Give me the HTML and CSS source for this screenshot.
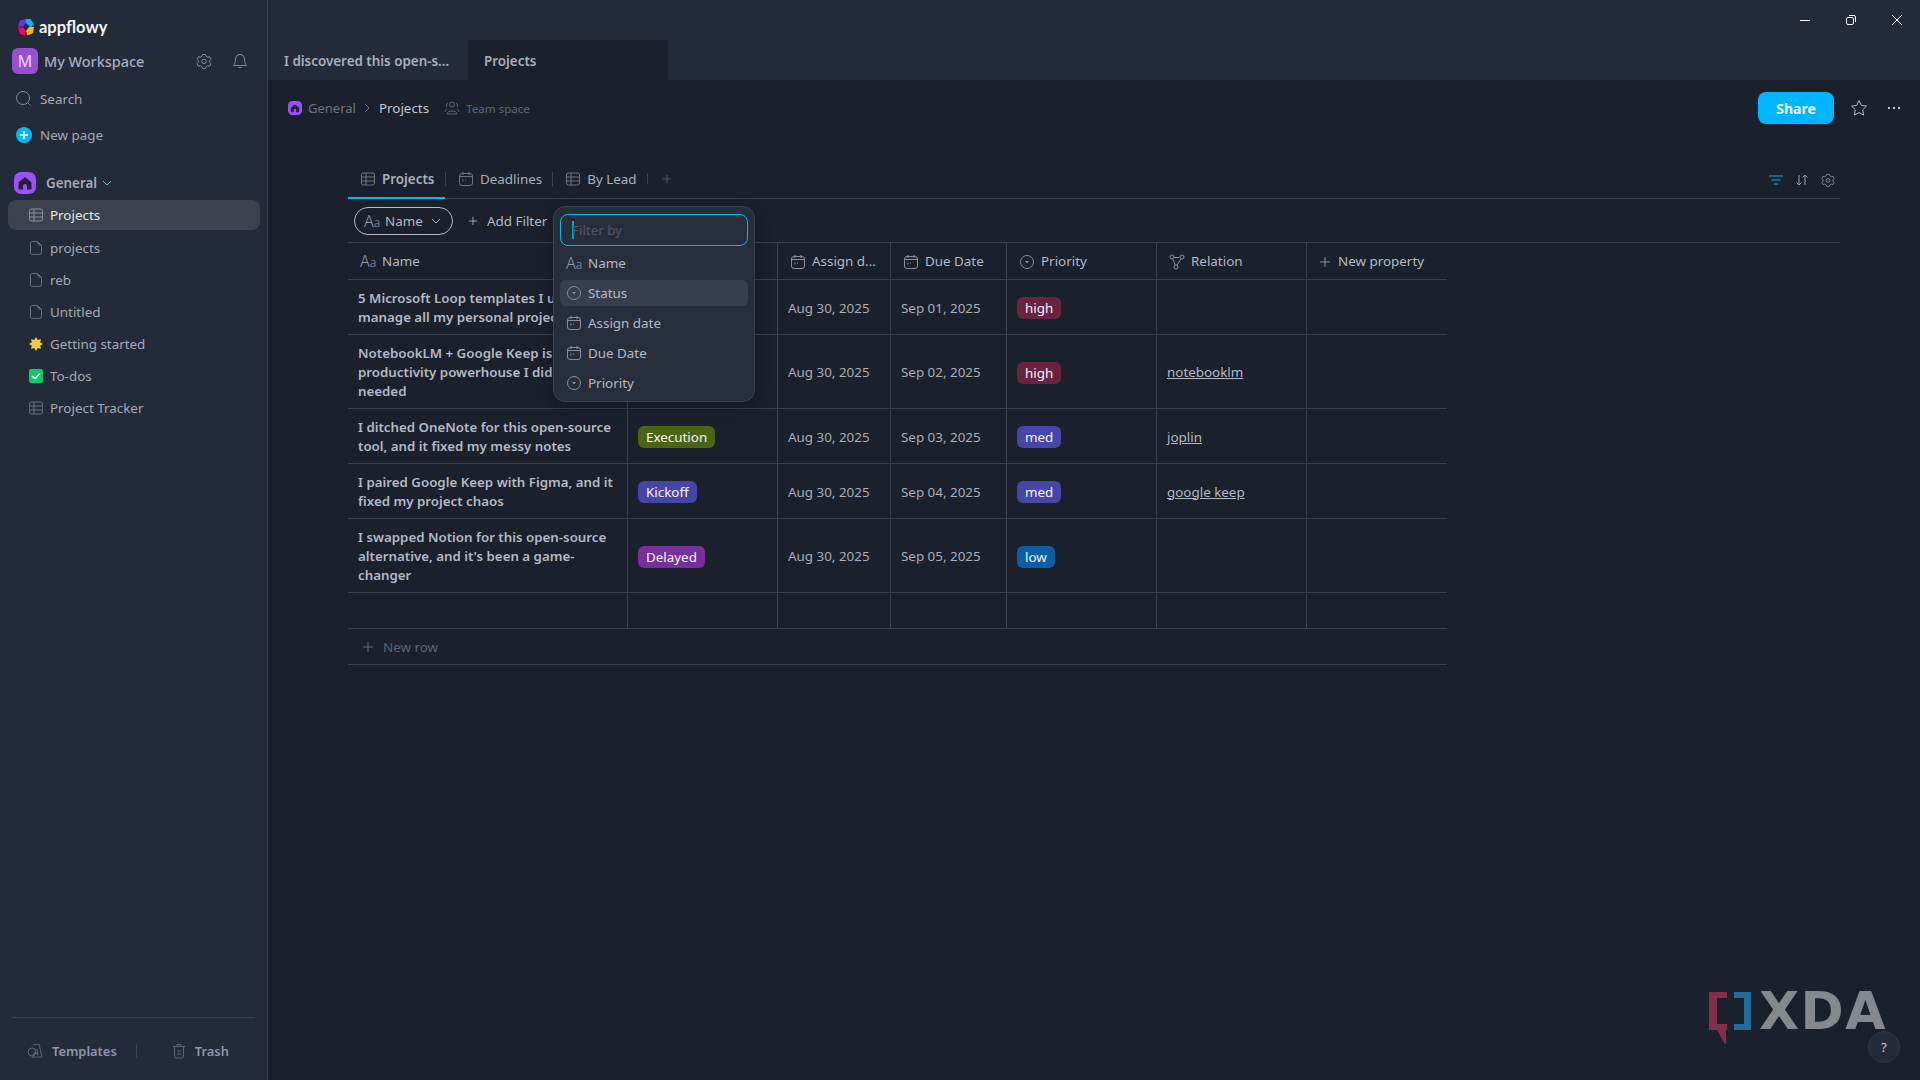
FILE: index.html

```html
<!DOCTYPE html>
<html lang="en">
<head>
  <meta charset="UTF-8" />
  <title>AppFlowy - Projects</title>
  <link rel="stylesheet" href="styles.css">
</head>
<body>
  <svg class="sprite" width="0" height="0">
    <symbol id="i-grid" viewBox="0 0 16 16"><rect x="1.5" y="2" width="13" height="12" rx="2" fill="none" stroke="currentColor"/><path d="M1.5 6h13M1.5 10h13M6 2v12" fill="none" stroke="currentColor"/></symbol>
    <symbol id="i-doc" viewBox="0 0 16 16"><path d="M3.5 1.5h6l4 4v7a2 2 0 0 1-2 2h-8a2 2 0 0 1-1-.5V3a1.5 1.5 0 0 1 1-1.5zM9.500 1.500a4 4 0 0 0 4 4" fill="none" stroke="currentColor"/></symbol>
    <symbol id="i-cal" viewBox="0 0 16 16"><rect x="1.500" y="2.500" width="13" height="12" rx="2.500" fill="none" stroke="currentColor"/><path d="M1.500 5.500h13M5 1v3M11 1v3M5 8.500v2M7.500 8.500v1" fill="none" stroke="currentColor"/></symbol>
    <symbol id="i-select" viewBox="0 0 16 16"><circle cx="8" cy="8" r="6.500" fill="none" stroke="currentColor"/><path d="M6 7h4l-2 2.500z" fill="currentColor"/></symbol>
    <symbol id="i-gear" viewBox="0 0 16 16"><path d="M6.500 1.500h3l.6 1.800 1.700.9 1.800-.5 1.400 2.500-1.300 1.300v1.900l1.300 1.300-1.400 2.500-1.800-.5-1.700.9-.6 1.800h-3l-.6-1.800-1.700-.9-1.800.5L1 10.700l1.300-1.300V7.500L1 6.200l1.400-2.500 1.800.5 1.700-.9z" fill="none" stroke="currentColor"/><circle cx="8" cy="8.450" r="2.200" fill="none" stroke="currentColor"/></symbol>
    <symbol id="i-plus" viewBox="0 0 12 12"><path d="M6 1v10M1 6h10" fill="none" stroke="currentColor"/></symbol>
    <symbol id="i-home" viewBox="0 0 22 22"><rect width="22" height="22" rx="7" fill="#9e4fff"/><path d="M11 5l6.500 5.500V16a1.500 1.500 0 0 1-1.500 1.500h-3v-3.500a2 2 0 0 0-4 0v3.500H6A1.500 1.500 0 0 1 4.500 16v-5.500z" fill="#1d2330"/></symbol>
    <symbol id="i-down" viewBox="0 0 10 6"><path d="M1 1l4 4 4-4" fill="none" stroke="currentColor"/></symbol>
  </svg>

  <aside class="sidebar">
    <div class="brand">
      <svg class="brand-logo" width="18" height="18" viewBox="0 0 18 18">
        <path d="M9 1L3 2.500 1 8.500h5L9 5z" fill="#8427e0"/>
        <path d="M9 1h4.500L17 6.500l-3.500 3L9 5z" fill="#00b5ff"/>
        <path d="M17 9l-1 6-5.500 2.500L9 13l3-4z" fill="#ffbd00"/>
        <path d="M1 9.500h5l3 3.500-1 4.500-5-1.500z" fill="#fb006d"/>
      </svg>
      <span class="brand-name">appflowy</span>
    </div>
    <div class="workspace">
      <div class="avatar">M</div>
      <span class="workspace-name">My Workspace</span>
      <svg class="workspace-gear" width="16" height="16"><use href="#i-gear"/></svg>
      <svg class="workspace-bell" width="16" height="16" viewBox="0 0 16 16"><path d="M8 1.500a4.500 4.500 0 0 0-4.500 4.500c0 4-1.500 5.500-2 6.500h13c-.5-1-2-2.500-2-6.500A4.500 4.500 0 0 0 8 1.500zM6.500 14.500h3" fill="none" stroke="currentColor"/></svg>
    </div>
    <div class="side-action">
      <svg width="16" height="16" viewBox="0 0 16 16"><circle cx="7" cy="7" r="6.500" fill="none" stroke="currentColor"/><path d="M12 12l2.500 2.500" stroke="currentColor"/></svg>
      <span>Search</span>
    </div>
    <div class="side-action">
      <svg width="16" height="16" viewBox="0 0 16 16"><circle cx="8" cy="8" r="8" fill="#00bcf0"/><path d="M8 4v8M4 8h8" stroke="#fff" stroke-width="1.500"/></svg>
      <span>New page</span>
    </div>
    <div class="space-head">
      <svg width="22" height="22"><use href="#i-home"/></svg>
      <span class="space-name">General</span>
      <svg width="10" height="6"><use href="#i-down"/></svg>
    </div>
    <nav class="page-list">
      <div class="page-item active"><svg width="16" height="16"><use href="#i-grid"/></svg>Projects</div>
      <div class="page-item"><svg width="16" height="16"><use href="#i-doc"/></svg>projects</div>
      <div class="page-item"><svg width="16" height="16"><use href="#i-doc"/></svg>reb</div>
      <div class="page-item"><svg width="16" height="16"><use href="#i-doc"/></svg>Untitled</div>
      <div class="page-item"><svg width="16" height="16" viewBox="0 0 16 16"><path d="M8 1l1.800 3 3.200-1-.8 3.300L15 8l-2.800 1.700.8 3.300-3.200-1L8 15l-1.800-3-3.200 1 .8-3.300L1 8l2.800-1.700L3 3l3.200 1z" fill="#f6c945"/></svg>Getting started</div>
      <div class="page-item"><svg width="16" height="16" viewBox="0 0 16 16"><rect x="1" y="1" width="14" height="14" rx="2" fill="#0ecb6a"/><path d="M4 8l3 2.500 5-5" fill="none" stroke="#fff" stroke-width="1.500"/></svg>To-dos</div>
      <div class="page-item"><svg width="16" height="16"><use href="#i-grid"/></svg>Project Tracker</div>
    </nav>
    <div class="side-footer">
      <div class="footer-link templates">
        <svg width="16" height="16" viewBox="0 0 16 16"><circle cx="5" cy="9" r="4" fill="none" stroke="currentColor"/><path d="M6 2l6-1 3 13H5l3-5 3 3-1-6" fill="none" stroke="currentColor"/></svg>
        Templates
      </div>
      <div class="footer-rule"></div>
      <div class="footer-link trash">
        <svg width="14" height="16" viewBox="0 0 14 16"><path d="M1 3.500h12M5 3.500V1.500h4v2M2.500 3.500v10a1.500 1.500 0 0 0 1.500 1.500h6a1.500 1.500 0 0 0 1.500-1.500v-10M5 8h4M5 11h4" fill="none" stroke="currentColor"/></svg>
        Trash
      </div>
    </div>
  </aside>

  <main class="main">
    <header class="topbar">
      <div class="tab">I discovered this open-s...</div>
      <div class="tab tab-active">Projects</div>
      <div class="win-controls">
        <svg width="12" height="12" viewBox="0 0 12 12"><path d="M1 6.500h10" stroke="#fff"/></svg>
        <svg width="12" height="12" viewBox="0 0 12 12"><rect x="1.500" y="3.500" width="7" height="7" rx="1.500" fill="none" stroke="#fff"/><path d="M4 1.500h5a1.500 1.500 0 0 1 1.500 1.500v5" fill="none" stroke="#fff"/></svg>
        <svg width="12" height="12" viewBox="0 0 12 12"><path d="M1 1l10 10M11 1L1 11" stroke="#fff"/></svg>
      </div>
    </header>

    <div class="crumbs">
      <svg width="14" height="14"><use href="#i-home"/></svg>
      <span class="crumb-general">General</span>
      <svg class="crumb-sep" width="6" height="10" viewBox="0 0 6 10"><path d="M1 1l4 4-4 4" fill="none" stroke="currentColor"/></svg>
      <span class="crumb-current">Projects</span>
      <svg class="crumb-team-icon" width="16" height="14" viewBox="0 0 16 14"><circle cx="8" cy="3.500" r="2.500" fill="none" stroke="currentColor"/><path d="M3 13c0-4 10-4 10 0zM4 2.500a2 2 0 0 0-1 3.500M12 2.500a2 2 0 0 1 1 3.500M1 11c0-2 1-3 2-3M15 11c0-2-1-3-2-3" fill="none" stroke="currentColor"/></svg>
      <span class="crumb-team">Team space</span>
      <div class="crumb-actions">
        <button class="share-btn">Share</button>
        <svg width="18" height="18" viewBox="0 0 18 18"><path d="M9 1.500l2.300 4.900 5.200.7-3.800 3.700.9 5.300L9 13.600l-4.600 2.500.9-5.300L1.500 7.100l5.200-.7z" fill="none" stroke="#b4bac6" stroke-linejoin="round"/></svg>
        <svg class="dots" width="14" height="4" viewBox="0 0 14 4"><circle cx="2" cy="2" r="1.200" fill="#b4bac6"/><circle cx="7" cy="2" r="1.200" fill="#b4bac6"/><circle cx="12" cy="2" r="1.200" fill="#b4bac6"/></svg>
      </div>
    </div>

    <section class="board">
      <div class="view-tabs">
        <div class="view-tab current"><svg width="16" height="16"><use href="#i-grid"/></svg>Projects</div>
        <div class="view-tab"><svg width="16" height="16"><use href="#i-cal"/></svg>Deadlines</div>
        <div class="view-tab"><svg width="16" height="16"><use href="#i-grid"/></svg>By Lead</div>
        <svg class="view-add" width="10" height="10"><use href="#i-plus"/></svg>
        <div class="view-tools">
          <svg width="14" height="10" viewBox="0 0 14 10"><path d="M0 1h14M2.500 5h9M5 9h4" stroke="#0e7fae" stroke-width="1.500"/></svg>
          <svg width="14" height="12" viewBox="0 0 14 12"><path d="M4 1v10M1.500 8.500L4 11l2.500-2.500M10 11V1M7.500 3.500L10 1l2.500 2.500" fill="none" stroke="#9aa0ac"/></svg>
          <svg width="14" height="14"><use href="#i-gear"/></svg>
        </div>
      </div>

      <div class="filter-row">
        <div class="filter-pill"><span class="aa">A<small>a</small></span>Name<svg width="10" height="6"><use href="#i-down"/></svg></div>
        <div class="add-filter"><svg width="10" height="10"><use href="#i-plus"/></svg>Add Filter</div>
      </div>

      <div class="filter-popup">
        <div class="popup-input"><span class="caret"></span>Filter by</div>
        <div class="popup-item"><span class="aa">A<small>a</small></span>Name</div>
        <div class="popup-item hover"><svg width="16" height="16"><use href="#i-select"/></svg>Status</div>
        <div class="popup-item"><svg width="16" height="16"><use href="#i-cal"/></svg>Assign date</div>
        <div class="popup-item"><svg width="16" height="16"><use href="#i-cal"/></svg>Due Date</div>
        <div class="popup-item"><svg width="16" height="16"><use href="#i-select"/></svg>Priority</div>
      </div>

      <div class="grid-head">
        <div class="row head-row">
          <div class="cell"><span class="aa">A<small>a</small></span>Name</div>
          <div class="cell"></div>
          <div class="cell"><svg width="16" height="16"><use href="#i-cal"/></svg>Assign d...</div>
          <div class="cell"><svg width="16" height="16"><use href="#i-cal"/></svg>Due Date</div>
          <div class="cell"><svg width="16" height="16"><use href="#i-select"/></svg>Priority</div>
          <div class="cell"><svg width="16" height="16" viewBox="0 0 16 16"><circle cx="3" cy="3" r="2" fill="none" stroke="currentColor"/><circle cx="13" cy="3" r="2" fill="none" stroke="currentColor"/><circle cx="7" cy="13" r="2" fill="none" stroke="currentColor"/><path d="M5 3.500l5.500 0M3.800 5l2.400 6M12 5l-4 6" fill="none" stroke="currentColor"/></svg>Relation</div>
          <div class="cell"><svg width="12" height="12"><use href="#i-plus"/></svg><span class="new-prop">New property</span></div>
        </div>
      </div>

      <div class="row">
        <div class="cell name">5 Microsoft Loop templates I use to manage all my personal projects</div>
        <div class="cell"><span class="tag tag-green">Planning</span></div>
        <div class="cell date">Aug 30, 2025</div>
        <div class="cell date">Sep 01, 2025</div>
        <div class="cell"><span class="tag tag-red">high</span></div>
        <div class="cell"></div>
        <div class="cell"></div>
      </div>
      <div class="row">
        <div class="cell name">NotebookLM + Google Keep is a productivity powerhouse I didn't know I needed</div>
        <div class="cell"><span class="tag tag-green">Planning</span></div>
        <div class="cell date">Aug 30, 2025</div>
        <div class="cell date">Sep 02, 2025</div>
        <div class="cell"><span class="tag tag-red">high</span></div>
        <div class="cell"><a class="rel-link">notebooklm</a></div>
        <div class="cell"></div>
      </div>
      <div class="row">
        <div class="cell name">I ditched OneNote for this open-source tool, and it fixed my messy notes</div>
        <div class="cell"><span class="tag tag-green">Execution</span></div>
        <div class="cell date">Aug 30, 2025</div>
        <div class="cell date">Sep 03, 2025</div>
        <div class="cell"><span class="tag tag-indigo">med</span></div>
        <div class="cell"><a class="rel-link">joplin</a></div>
        <div class="cell"></div>
      </div>
      <div class="row">
        <div class="cell name">I paired Google Keep with Figma, and it fixed my project chaos</div>
        <div class="cell"><span class="tag tag-indigo">Kickoff</span></div>
        <div class="cell date">Aug 30, 2025</div>
        <div class="cell date">Sep 04, 2025</div>
        <div class="cell"><span class="tag tag-indigo">med</span></div>
        <div class="cell"><a class="rel-link">google keep</a></div>
        <div class="cell"></div>
      </div>
      <div class="row">
        <div class="cell name">I swapped Notion for this open-source alternative, and it's been a game-changer</div>
        <div class="cell"><span class="tag tag-purple">Delayed</span></div>
        <div class="cell date">Aug 30, 2025</div>
        <div class="cell date">Sep 05, 2025</div>
        <div class="cell"><span class="tag tag-blue">low</span></div>
        <div class="cell"></div>
        <div class="cell"></div>
      </div>
      <div class="row empty-row">
        <div class="cell"></div><div class="cell"></div><div class="cell"></div><div class="cell"></div><div class="cell"></div><div class="cell"></div><div class="cell"></div>
      </div>
      <div class="new-row"><svg width="12" height="12"><use href="#i-plus"/></svg>New row</div>
    </section>

    <div class="watermark">
      <svg width="42" height="52" viewBox="0 0 42 52">
        <path d="M0 0h18v6H8v26h10v6h-1v16L8 38H0z" fill="#8c2d4e"/>
        <path d="M25 0h17v38H25v-6h10V6H25z" fill="#22719f"/>
      </svg>
      <span class="watermark-text">XDA</span>
    </div>
    <div class="help-btn">?</div>
  </main>
</body>
</html>
```

FILE: styles.css

```css
* {
  box-sizing: border-box;
}
body {
  margin: 0;
  width: 1920px;
  height: 1080px;
  overflow: hidden;
  display: flex;
  font-family: "Noto Sans", sans-serif;
  font-size: 13.4px;
  background: #1a202c;
  color: #b4bac6;
}
.sprite {
  position: absolute;
}
svg {
  flex: none;
  display: block;
}
.aa {
  font-size: 16px;
  font-weight: 300;
  color: #9298a4;
  width: 16px;
  flex: none;
  white-space: nowrap;
}
.aa small {
  font-size: 12px;
}

/* sidebar */
.sidebar {
  width: 268px;
  flex: none;
  background: #232b38;
  border-right: 1px solid #3a4150;
  display: flex;
  flex-direction: column;
  height: 1080px;
}
.brand {
  height: 48px;
  padding: 6px 0 0 17px;
  display: flex;
  align-items: center;
  gap: 4px;
}
.brand-name {
  font-family: "Lato", sans-serif;
  font-size: 16.5px;
  font-weight: 700;
  color: #f2f4f7;
}
.workspace {
  height: 26px;
  padding-left: 12px;
  display: flex;
  align-items: center;
  color: #858b98;
}
.avatar {
  width: 26px;
  height: 26px;
  border-radius: 6px;
  background: #9a4fd1;
  color: #eadcf5;
  font-size: 16px;
  text-align: center;
  line-height: 26px;
}
.workspace-name {
  margin-left: 6px;
  font-size: 14.4px;
  font-weight: 500;
  color: #a9afbb;
  width: 152px;
}
.workspace-bell {
  margin-left: 20px;
}
.side-action {
  height: 36px;
  padding-left: 16px;
  display: flex;
  align-items: center;
  gap: 8px;
  color: #a4aab6;
}
.side-action svg {
  color: #858b98;
}
.side-action:nth-child(3) {
  margin-top: 7px;
}
.space-head {
  margin-top: 15px;
  height: 30px;
  padding-left: 14px;
  display: flex;
  align-items: center;
  color: #a4aab6;
}
.space-name {
  margin-left: 10px;
  margin-right: 5px;
  font-weight: 600;
}
.page-list {
  margin-top: 2px;
  padding: 0 7px 0 8px;
}
.page-item {
  height: 32px;
  padding-left: 20px;
  display: flex;
  align-items: center;
  gap: 6px;
  border-radius: 8px;
  color: #a4aab6;
}
.page-item svg {
  color: #686f7d;
}
.page-item.active {
  height: 30px;
  margin-bottom: 2px;
  background: #3b424e;
  color: #e6e9ee;
}
.page-item.active svg {
  color: #8a909c;
}
.side-footer {
  margin: auto 12px 0;
  height: 63px;
  border-top: 1px solid #3a4150;
  display: flex;
  align-items: center;
  padding: 3px 0 0 15px;
  color: #9095a8;
  font-size: 12.9px;
  font-weight: 600;
}
.footer-link {
  display: flex;
  align-items: center;
  gap: 9px;
}
.footer-link svg {
  color: #5f6675;
}
.footer-rule {
  width: 1px;
  height: 14px;
  background: #3a4150;
  margin: 0 35px 0 19px;
}

/* main */
.main {
  flex: 1;
  position: relative;
  min-width: 0;
}
.topbar {
  height: 80px;
  background: #232b38;
  display: flex;
  align-items: flex-end;
}
.tab {
  width: 200px;
  height: 40px;
  padding: 1px 0 0 16px;
  line-height: 40px;
  font-weight: 600;
  color: #a9afbb;
  white-space: nowrap;
}
.win-controls {
  margin-left: auto;
  align-self: flex-start;
  display: flex;
  gap: 34px;
  padding: 14px 17px 0 0;
}
.tab-active {
  background: #1a202c;
}
.crumbs {
  height: 56px;
  padding: 0 19px 0 20px;
  display: flex;
  align-items: center;
}
.crumb-general {
  margin-left: 6px;
  font-size: 13px;
  color: #6d7482;
}
.crumb-sep {
  margin: 0 9px 0 8px;
  color: #6d7482;
}
.crumb-current {
  color: #c4c9d2;
}
.crumb-team-icon {
  margin: 0 6px 0 15px;
  color: #5f6675;
}
.crumb-team {
  font-size: 11.6px;
  color: #5f6675;
}
.crumb-actions {
  margin-left: auto;
  display: flex;
  align-items: center;
  gap: 16px;
}
.share-btn {
  width: 76px;
  height: 32px;
  border: 0;
  border-radius: 8px;
  background: #00b5ff;
  color: #f4fbff;
  font-family: inherit;
  font-size: 14px;
  font-weight: 700;
}
.dots {
  margin-left: 3px;
}

/* board */
.board {
  position: relative;
  margin: 24px 80px 0;
}
.view-tabs {
  height: 39px;
  border-bottom: 1px solid #3a4150;
  display: flex;
  align-items: center;
}
.view-tab {
  height: 38px;
  display: flex;
  align-items: center;
  gap: 6px;
  padding: 0 10px 0 12px;
  color: #a9afbb;
  white-space: nowrap;
}
.view-tab svg {
  color: #6d7482;
}
.view-tab.current {
  width: 97px;
  height: 39px;
  margin-bottom: -1px;
  padding: 0 0 0 12px;
  font-weight: 600;
  border-bottom: 2px solid #00bcf0;
}
.view-tab:not(.current) {
  border-left: 1px solid #3a4150;
  height: 14px;
}
.view-add {
  color: #5f6675;
  box-sizing: content-box;
  padding-left: 14px;
  border-left: 1px solid #3a4150;
}
.view-tools {
  margin-left: auto;
  padding: 2px 5px 0 0;
  display: flex;
  align-items: center;
  gap: 12px;
  color: #8a909c;
}
.filter-row {
  height: 43px;
  padding: 1px 0 0 6px;
  display: flex;
  align-items: center;
}
.filter-pill {
  width: 99px;
  height: 28px;
  border: 1px solid #b4bac6;
  border-radius: 14px;
  padding-left: 9px;
  display: flex;
  align-items: center;
  gap: 5px;
  color: #b4bac6;
}
.filter-pill svg {
  margin-left: 3px;
}
.add-filter {
  margin-left: 15px;
  display: flex;
  align-items: center;
  gap: 9px;
  color: #b4bac6;
}
.filter-popup {
  position: absolute;
  left: 205px;
  top: 46px;
  width: 202px;
  height: 196px;
  padding: 7px 6px;
  background: #272e3b;
  border: 1px solid #3a4150;
  border-radius: 12px;
  box-shadow: 0 4px 16px rgba(0, 0, 0, .25);
  z-index: 5;
}
.popup-input {
  height: 32px;
  margin-bottom: 2px;
  border: 1px solid #00bcf0;
  border-radius: 8px;
  padding-left: 11px;
  display: flex;
  align-items: center;
  color: #4f5666;
}
.caret {
  width: 2px;
  height: 18px;
  background: #00a0d6;
  margin-right: -2px;
  flex: none;
}
.popup-item {
  height: 26px;
  margin-top: 4px;
  padding-left: 6px;
  border-radius: 6px;
  display: flex;
  align-items: center;
  gap: 6px;
  color: #b4bac6;
}
.popup-item svg,
.cell svg {
  color: #8a909c;
}
.popup-item.hover {
  background: #383f4c;
}
.grid-head {
  border-top: 1px solid #3a4150;
}
.row {
  width: 1099px;
  display: grid;
  grid-template-columns: 280px 150px 113px 116px 150px 150px 140px;
  border-bottom: 1px solid #3a4150;
}
.cell {
  border-right: 1px solid #3a4150;
  display: flex;
  align-items: center;
  padding: 9px 10px 7px;
  line-height: 19px;
  min-height: 54px;
  white-space: nowrap;
  color: #a9aeb8;
}
.cell:last-child {
  border-right: 0;
}
.cell.name {
  font-size: 13.3px;
  font-weight: 600;
  color: #b4bac6;
  display: block;
  white-space: normal;
}
.head-row .cell {
  min-height: 36px;
  padding: 1px 12px 0;
  gap: 6px;
  color: #b4bac6;
}
.new-prop {
  margin-left: 1px;
}
.empty-row .cell {
  min-height: 35px;
}
.tag {
  height: 22px;
  line-height: 22px;
  padding: 0 8px;
  border-radius: 6px;
  color: #f4f5f7;
  white-space: nowrap;
}
.tag-red {
  background: #6b2142;
}
.tag-green {
  background: #4a6414;
}
.tag-indigo {
  background: #4646a8;
}
.tag-purple {
  background: #762f9b;
}
.tag-blue {
  background: #0c5fa5;
}
.rel-link {
  text-decoration: underline;
  color: #b4bac6;
}
.new-row {
  width: 1099px;
  height: 36px;
  border-bottom: 1px solid #3a4150;
  padding: 1px 0 0 14px;
  display: flex;
  align-items: center;
  gap: 9px;
  color: #5f6675;
}

/* overlays on the corner */
.watermark {
  position: absolute;
  right: 33px;
  top: 992px;
  display: flex;
  gap: 8px;
  opacity: .95;
}
.watermark-text {
  font-family: "DejaVu Sans", sans-serif;
  font-size: 52px;
  font-weight: 700;
  line-height: 38px;
  letter-spacing: 1.500px;
  color: #8c8e96;
}
.help-btn {
  position: absolute;
  right: 20px;
  top: 1031px;
  width: 32px;
  height: 32px;
  border-radius: 50%;
  background: #232b38;
  border: 1px solid #2f3643;
  text-align: center;
  line-height: 30px;
  color: #c4c9d2;
}
```
